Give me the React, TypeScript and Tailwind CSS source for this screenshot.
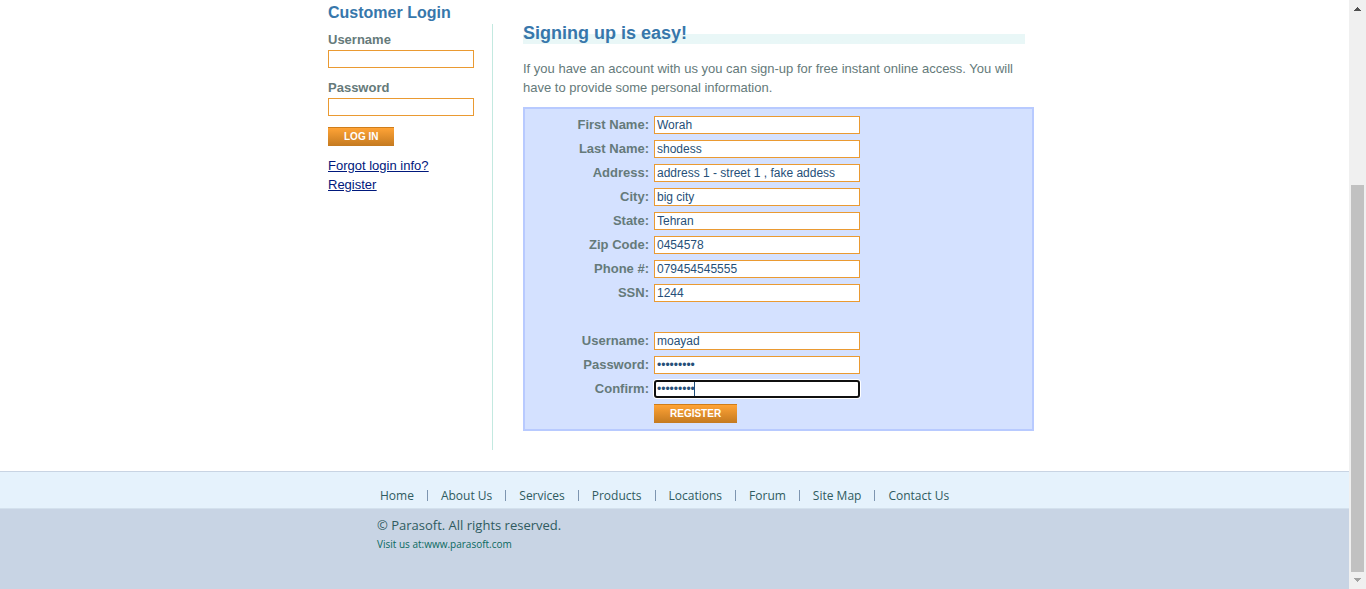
import { useId } from "react";

type Field = { label: string; value?: string; password?: boolean; focused?: boolean };

const personal: Field[] = [
  { label: "First Name:", value: "Worah" },
  { label: "Last Name:", value: "shodess" },
  { label: "Address:", value: "address 1 - street 1 , fake addess" },
  { label: "City:", value: "big city" },
  { label: "State:", value: "Tehran" },
  { label: "Zip Code:", value: "0454578" },
  { label: "Phone #:", value: "079454545555" },
  { label: "SSN:", value: "1244" },
];

const account: Field[] = [
  { label: "Username:", value: "moayad" },
  { label: "Password:", value: "123456789", password: true },
  { label: "Confirm:", value: "123456789", password: true, focused: true },
];

const links = ["Home", "About Us", "Services", "Products", "Locations", "Forum", "Site Map", "Contact Us"];

function FormRow({ label, value, password, focused }: Field) {
  const id = useId();
  return (
    <div className="flex h-6 items-center">
      <label htmlFor={id} className="w-[124px] text-right text-[13px] leading-[18px] font-bold text-[#657a7a]">
        {label}
      </label>
      <div className="relative ml-[5px] flex w-[206px]">
        <input
          id={id}
          type={password ? "password" : "text"}
          defaultValue={value}
          className={
            focused
              ? "h-[18px] w-full rounded-[3px] border-2 border-[#101010] bg-white px-px text-[12px] leading-[14px] text-[#264f78] shadow-[0_0_0_1px_#ffffff] outline-none"
              : "h-[18px] w-full border border-[#ea9a32] bg-white px-[2px] text-[12px] leading-[14px] text-[#264f78] outline-none"
          }
        />
        {focused && <span aria-hidden="true" className="absolute top-[2px] left-10 h-[14px] w-px bg-[#1f4f7a]" />}
      </div>
    </div>
  );
}

function ActionButton({ children, type }: { children: string; type: "submit" | "button" }) {
  return (
    <button
      type={type}
      className="block h-[19px] border-t border-[#cf7d1a] bg-linear-to-b from-[#ffa336] to-[#c47a20] px-4 text-[10px] leading-[18px] font-bold text-white"
    >
      {children}
    </button>
  );
}

function LoginField({ label, type }: { label: string; type: string }) {
  const id = useId();
  return (
    <div className="mb-[10px]">
      <label htmlFor={id} className="mb-px block text-[13px] leading-[19px] font-bold text-[#657a7a]">
        {label}
      </label>
      <input id={id} type={type} className="block h-[18px] w-[146px] border border-[#ea9a32] bg-white px-[2px] text-[12px] outline-none" />
    </div>
  );
}

function ScrollBar() {
  return (
    <div aria-hidden="true" className="flex w-[17px] shrink-0 flex-col items-center bg-[#f0f0f0]">
      <svg className="h-[17px] w-[17px]" viewBox="0 0 17 17" shapeRendering="crispEdges" fill="#505050">
        <path d="M8 7h1v1h1v1h1v1h1v1H5v-1h1V9h1V8h1z" />
      </svg>
      <div className="grow-[168]" />
      <div className="w-[13px] grow-[387] bg-[#c1c1c1]" />
      <svg className="h-[17px] w-[17px]" viewBox="0 0 17 17" shapeRendering="crispEdges" fill="#a3a3a3">
        <path d="M5 6h7v1h-1v1h-1v1H9v1H8V9H7V8H6V7H5z" />
      </svg>
    </div>
  );
}

export default function App() {
  return (
    <div className="flex min-h-screen bg-white font-['Liberation_Sans',Arial,sans-serif]">
      <div className="flex min-w-0 grow flex-col">
        <main className="mx-auto mb-[21px] flex w-full max-w-[733px] pr-[7px] pl-5">
          <section className="w-[164px] shrink-0 pt-[3px]">
            <h2 className="mb-[7px] text-[16px] leading-5 font-bold text-[#3777ab]">Customer Login</h2>
            <form onSubmit={(e) => e.preventDefault()}>
              <LoginField label="Username" type="text" />
              <LoginField label="Password" type="password" />
              <div className="pt-px">
                <ActionButton type="submit">LOG IN</ActionButton>
              </div>
            </form>
            <div className="mt-[10px] flex flex-col items-start text-[13px] leading-[19px] text-[#00187c] underline">
              <a href="#forgot">Forgot login info?</a>
              <a href="#register">Register</a>
            </div>
          </section>
          <section className="mt-6 min-w-0 grow border-l border-[#c3e9e0] pb-[19px] pl-[30px]">
            <h1 className="mr-[9px] mb-[15px] h-5 bg-linear-to-b from-transparent from-50% to-[#e9f7f7] to-50% text-[18px] leading-[18px] font-bold text-[#3777ab]">
              Signing up is easy!
            </h1>
            <p className="mb-[10px] text-[13px] leading-[19px] text-[#657a7a]">
              If you have an account with us you can sign-up for free instant online access. You will have to provide some
              personal information.
            </p>
            <form
              onSubmit={(e) => e.preventDefault()}
              className="border-2 border-[#b8caff] bg-[#d4e1ff] pt-1 pb-[6px]"
            >
              {personal.map((f) => (
                <FormRow key={f.label} {...f} />
              ))}
              <div className="mt-6">
                {account.map((f) => (
                  <FormRow key={f.label} {...f} />
                ))}
              </div>
              <div className="mt-[3px] ml-[129px]">
                <ActionButton type="submit">REGISTER</ActionButton>
              </div>
            </form>
          </section>
        </main>
        <footer className="flex grow flex-col font-['Open_Sans','Noto_Sans',sans-serif] text-[#2f5b60]">
          <div className="border-t border-b border-t-[#c8d4e3] border-b-[#d3e1ed] bg-[#e5f2fc] pt-[14px] pb-[3px]">
            <nav className="mx-auto flex w-full max-w-[733px] items-center gap-[13px] pl-[72px] text-[12px] leading-[19px] whitespace-nowrap">
              {links.map((l, i) => (
                <div key={l} className="flex items-center gap-[13px]">
                  {i > 0 && <span aria-hidden="true" className="h-[11px] w-px bg-[#7d95b0]" />}
                  <a href={"#" + l.toLowerCase().replace(" ", "-")}>{l}</a>
                </div>
              ))}
            </nav>
          </div>
          <div className="grow bg-[#c8d4e4] pt-[7px]">
            <div className="mx-auto w-full max-w-[733px] pl-[69px]">
              <p className="text-[13px] leading-[19px]">© Parasoft. All rights reserved.</p>
              <p className="text-[10px] leading-[19px] text-[#08695f]">
                Visit us at:<a href="#parasoft">www.parasoft.com</a>
              </p>
            </div>
          </div>
        </footer>
      </div>
      <ScrollBar />
    </div>
  );
}
